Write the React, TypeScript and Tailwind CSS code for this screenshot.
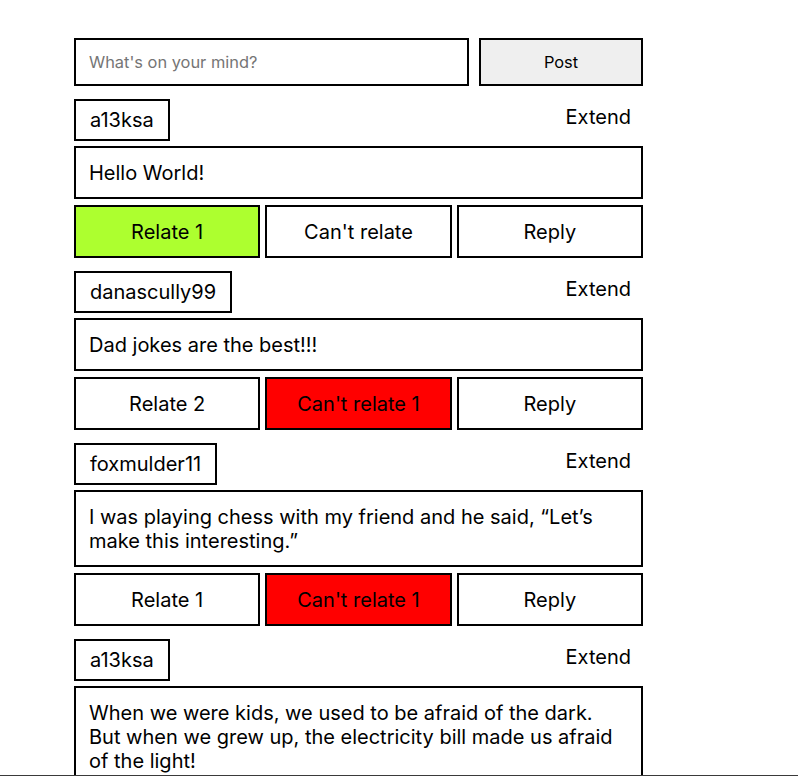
import { useState } from 'react'

type Post = {
  id: number
  user: string
  text: string
  relate: number
  cantRelate: number
  mine: 'relate' | 'cant' | null
}

const initialPosts: Post[] = [
  { id: 1, user: 'a13ksa', text: 'Hello World!', relate: 1, cantRelate: 0, mine: 'relate' },
  { id: 2, user: 'danascully99', text: 'Dad jokes are the best!!!', relate: 2, cantRelate: 1, mine: 'cant' },
  {
    id: 3,
    user: 'foxmulder11',
    text: 'I was playing chess with my friend and he said, \u201cLet\u2019s make this interesting.\u201d',
    relate: 1,
    cantRelate: 1,
    mine: 'cant',
  },
  {
    id: 4,
    user: 'a13ksa',
    text: 'When we were kids, we used to be afraid of the dark. But when we grew up, the electricity bill made us afraid of the light!',
    relate: 0,
    cantRelate: 0,
    mine: null,
  },
]

function PostCard({ post }: { post: Post }) {
  return (
    <div className="flex flex-col">
      <div className="flex justify-between items-start">
        <div className="border-2 border-black px-[14px] py-[7px] leading-[24px]">{post.user}</div>
        <button className="pt-[6px] pr-3 leading-[24px]">Extend</button>
      </div>
      <div className="mt-[5px] border-2 border-black px-[13px] pt-[13px] pb-[12px] leading-[24px]">{post.text}</div>
      <div className="mt-[6px] grid grid-cols-3 gap-[5px]">
        <button
          className={`h-[53px] border-2 border-black ${post.mine === 'relate' ? 'bg-[#adff2f]' : 'bg-white'}`}
        >
          Relate{post.relate > 0 ? ` ${post.relate}` : ''}
        </button>
        <button
          className={`h-[53px] border-2 border-black ${post.mine === 'cant' ? 'bg-[#ff0000]' : 'bg-white'}`}
        >
          Can't relate{post.cantRelate > 0 ? ` ${post.cantRelate}` : ''}
        </button>
        <button className="h-[53px] border-2 border-black bg-white">Reply</button>
      </div>
    </div>
  )
}

export default function App() {
  const [draft, setDraft] = useState('')

  return (
    <div className="min-h-screen bg-white text-black text-[20px] font-['Inter',sans-serif]">
      <div className="ml-[74px] w-[569px] pt-[38px] flex flex-col gap-[13px]">
        <div className="flex gap-[10px]">
          <input
            value={draft}
            onChange={(e) => setDraft(e.target.value)}
            placeholder="What's on your mind?"
            className="flex-1 h-[48px] border-2 border-black px-[13px] text-[16.4px] placeholder:text-[#757575] outline-none"
          />
          <button className="w-[164px] h-[48px] border-2 border-black bg-[#efefef] text-[16.4px]">Post</button>
        </div>
        {initialPosts.map((p) => (
          <PostCard key={p.id} post={p} />
        ))}
      </div>
      <div className="fixed left-0 right-0 bottom-0 h-px bg-[#3a3a3a]" />
    </div>
  )
}
